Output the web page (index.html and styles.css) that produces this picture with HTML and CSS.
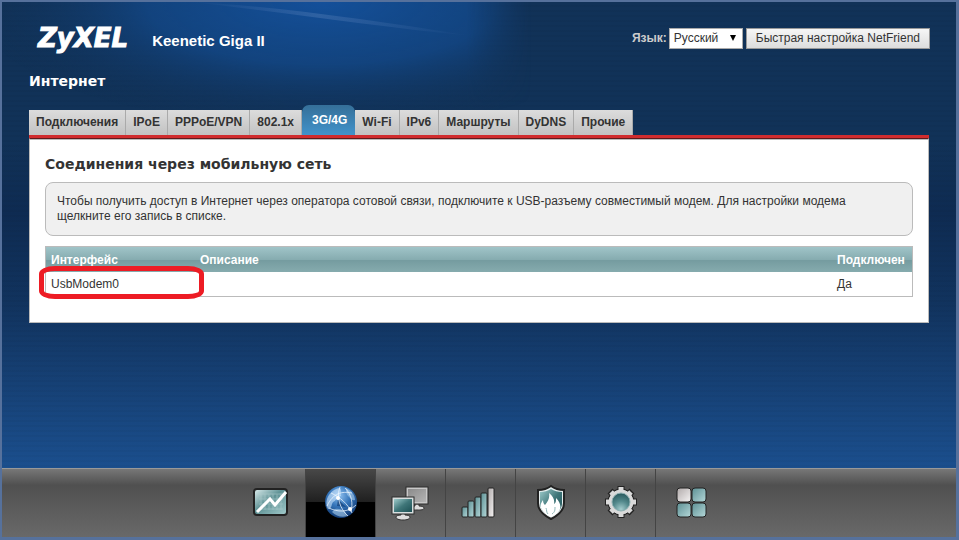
FILE: index.html
```html
<!DOCTYPE html>
<html lang="ru">
<head>
    <meta charset="UTF-8">
    <meta name="viewport" content="width=device-width, initial-scale=1.0">
    <title>Keenetic Giga II</title>
    <link rel="stylesheet" href="styles.css">
</head>
<body>
    <div class="page">
        <svg class="glow" width="540" height="130" viewBox="0 0 540 130" aria-hidden="true">
            <defs>
                <radialGradient id="light" gradientUnits="userSpaceOnUse" cx="0" cy="0" r="1" gradientTransform="translate(320 0) scale(350 125)"><stop offset="0" stop-color="#14509a"/><stop offset=".5" stop-color="#134888" stop-opacity=".8"/><stop offset="1" stop-color="#113258" stop-opacity="0"/></radialGradient>
                <linearGradient id="edge" x1="0" y1="0" x2="1" y2="0"><stop offset="0" stop-color="#fff"/><stop offset=".86" stop-color="#fff"/><stop offset=".98" stop-color="#000"/></linearGradient>
                <linearGradient id="ray" x1="0" y1="0" x2="1" y2="0"><stop offset="0" stop-color="#6d8fc4" stop-opacity="0"/><stop offset=".45" stop-color="#6d8fc4" stop-opacity=".3"/><stop offset="1" stop-color="#6d8fc4" stop-opacity="0"/></linearGradient>
                <mask id="fade"><rect width="540" height="130" fill="url(#edge)"/></mask>
            </defs>
            <rect width="540" height="130" fill="url(#light)" mask="url(#fade)"/>
            <path d="M190 0C270 4 370 18 470 34 370 24 280 10 190 0z" fill="url(#ray)"/>
        </svg>

        <header class="header">
            <div class="logo">ZyXEL</div>
            <div class="model">Keenetic Giga II</div>
            <div class="tools">
                <label for="lang">Язык:</label>
                <div class="select-wrap">
                    <select id="lang">
                        <option>Русский</option>
                        <option>English</option>
                    </select>
                    <svg class="arrow" width="6" height="6" viewBox="0 0 6 6" aria-hidden="true"><path d="M0 0h6L3 6z"/></svg>
                </div>
                <button type="button" class="wizard">Быстрая настройка NetFriend</button>
            </div>
        </header>

        <main class="content">
            <h1>Интернет</h1>
            <nav class="tabs">
                <a href="#connections">Подключения</a>
                <a href="#ipoe">IPoE</a>
                <a href="#pppoe">PPPoE/VPN</a>
                <a href="#8021x">802.1x</a>
                <a href="#modem" class="active">3G/4G</a>
                <a href="#wifi">Wi-Fi</a>
                <a href="#ipv6">IPv6</a>
                <a href="#routes">Маршруты</a>
                <a href="#dydns">DyDNS</a>
                <a href="#other">Прочие</a>
            </nav>
            <section class="panel">
                <h2>Соединения через мобильную сеть</h2>
                <p class="hint">Чтобы получить доступ в Интернет через оператора сотовой связи, подключите к USB-разъему совместимый модем. Для настройки модема щелкните его запись в списке.</p>
                <table class="list">
                    <thead>
                        <tr><th class="col-name">Интерфейс</th><th>Описание</th><th class="col-state">Подключен</th></tr>
                    </thead>
                    <tbody>
                        <tr><td class="marked">UsbModem0</td><td></td><td>Да</td></tr>
                    </tbody>
                </table>
            </section>
        </main>

        <nav class="dock">
            <a href="#monitor" aria-label="Монитор">
                <svg width="40" height="40" viewBox="0 0 40 40">
                    <defs>
                        <linearGradient id="teal" x1="0" y1="0" x2="1" y2="1"><stop offset="0" stop-color="#e0f0f0"/><stop offset=".45" stop-color="#5f9295"/><stop offset="1" stop-color="#a4cccd"/></linearGradient>
                        <linearGradient id="tile" x1="0" y1="0" x2="1" y2="1"><stop offset="0" stop-color="#5d9094"/><stop offset="1" stop-color="#b5d8d9"/></linearGradient>
                        <linearGradient id="screen" x1="0" y1="0" x2="1" y2="1"><stop offset="0" stop-color="#9ecbcb"/><stop offset=".5" stop-color="#3f7679"/><stop offset="1" stop-color="#1c5054"/></linearGradient>
                        <linearGradient id="gray" x1="0" y1="0" x2="1" y2="1"><stop offset="0" stop-color="#8b8b8b"/><stop offset="1" stop-color="#b4b4b4"/></linearGradient>
                        <linearGradient id="silver" x1="0" y1="0" x2="1" y2="1"><stop offset="0" stop-color="#b0aaaa"/><stop offset="1" stop-color="#f6f4f4"/></linearGradient>
                        <radialGradient id="globe" cx=".45" cy=".3" r=".75"><stop offset="0" stop-color="#8fc0ee"/><stop offset=".45" stop-color="#3575ba"/><stop offset="1" stop-color="#0d346d"/></radialGradient>
                        <radialGradient id="lens" cx=".5" cy=".9" r=".9"><stop offset="0" stop-color="#a4cccd"/><stop offset=".5" stop-color="#53898c"/><stop offset="1" stop-color="#28575b"/></radialGradient>
                    </defs>
                    <rect x="4" y="6" width="33" height="26" rx="3" fill="url(#teal)" stroke="#222" stroke-width="2"/>
                    <path d="M11 11v16M15 11v16M19 11v16M23 11v16M27 11v16M31 11v16M9 11h24M9 16h24M9 21h24M9 26h24" stroke="#b4d0d1" stroke-width="1" opacity=".5"/>
                    <path d="M7 29l13-13 5 6L36 9" fill="none" stroke="#fff" stroke-width="3"/>
                </svg>
            </a>
            <a href="#internet" class="active" aria-label="Интернет">
                <svg width="40" height="40" viewBox="0 0 40 40">
                    <circle cx="21" cy="19" r="16" fill="url(#globe)"/>
                    <path d="M7 16c2-6 8-11 13-11 2 3 0 5 1 8-4 0-5 5-8 6-2 3-1 7-5 7-2-3-2-7-1-10z" fill="#d2eaff" opacity=".6"/>
                    <path d="M26 5c5 2 9 7 9 12-4 1-4-2-7-4-2-2-2-5-2-8zM15 26c6-1 11 2 12 7-5 2-11 0-15-4z" fill="#b9dcf8" opacity=".55"/>
                    <path d="M18 16l8 8-9-1z" fill="#123e78" opacity=".7"/>
                    <path d="M7 23C13 10 22 8 32 10M11 10c9 4 17 11 21 20M20 4c-4 10 0 22 8 29M9 25c8 4 19 5 27-3M25 5c7 7 8 15 6 24" fill="none" stroke="#f0f8ff" stroke-width="1" opacity=".75"/>
                    <circle cx="18" cy="15" r="2" fill="#fff"/><circle cx="30" cy="26" r="2" fill="#fff"/>
                </svg>
            </a>
            <a href="#network" aria-label="Домашняя сеть">
                <svg width="40" height="40" viewBox="0 0 40 40">
                    <path d="M25 21h4v2c3 0 5 1 5 2 0 2-3 2-7 2s-7 0-7-2c0-1 2-2 5-2z" fill="#ddd" stroke="#333" stroke-width="1"/>
                    <rect x="16" y="4" width="22" height="17" fill="#c8c8c8" stroke="#2c2c2c" stroke-width="1"/>
                    <rect x="18" y="6" width="18" height="13" fill="url(#gray)"/>
                    <path d="M11 30h4v2c3 0 5 1 5 2 0 2-3 3-7 3s-7-1-7-3c0-1 2-2 5-2z" fill="#ddd" stroke="#333" stroke-width="1"/>
                    <rect x="2" y="14" width="22" height="17" fill="#d8dede" stroke="#2c2c2c" stroke-width="1"/>
                    <rect x="4" y="16" width="18" height="13" fill="url(#screen)"/>
                </svg>
            </a>
            <a href="#wifi-net" aria-label="Сеть Wi-Fi">
                <svg width="40" height="40" viewBox="0 0 40 40">
                    <g fill="url(#tile)" stroke="#222" stroke-width="1">
                        <rect x="2" y="24" width="6" height="10" rx="1"/>
                        <rect x="8" y="18" width="6" height="16" rx="1"/>
                        <rect x="15" y="14" width="6" height="20" rx="1"/>
                        <rect x="21" y="10" width="6" height="24" rx="1"/>
                        <rect x="28" y="5" width="6" height="29" rx="1" fill="url(#silver)"/>
                    </g>
                </svg>
            </a>
            <a href="#security" aria-label="Безопасность">
                <svg width="40" height="40" viewBox="0 0 40 40">
                    <path d="M21 3c4 3 8 4 13 4v13c0 7-5 12-13 16C13 32 8 27 8 20V7c5 0 9-1 13-4z" fill="#e6eeee" stroke="#222" stroke-width="2"/>
                    <path d="M21 6c3 2 7 3 11 3v11c0 6-4 10-11 13-7-3-11-7-11-13V9c4 0 8-1 11-3z" fill="url(#screen)"/>
                    <path d="M19 10c4 3 6 7 5 11 2-1 2-3 2-6 4 4 6 9 3 13-2 3-5 4-8 6-5-2-8-5-10-9-1-3 0-5 2-8 0 3 1 4 2 5 3-4 5-7 4-12z" fill="#fff"/>
                    <path d="M16 25c1 2 0 4 2 6M22 31c3-2 3-4 3-7" fill="none" stroke="#8fb7b8" stroke-width="1"/>
                </svg>
            </a>
            <a href="#system" aria-label="Система">
                <svg width="40" height="40" viewBox="0 0 40 40">
                    <g fill="none" stroke="#222">
                        <circle cx="21" cy="19" r="13" fill="#222"/>
                        <path d="M21 3v32M5 19h32M10 8l22 22M32 8L10 30" stroke-width="7"/>
                    </g>
                    <g fill="none" stroke="#dadada">
                        <circle cx="21" cy="19" r="12" fill="#dadada"/>
                        <path d="M21 4v30M6 19h30M11 9l20 20M31 9L11 29" stroke-width="5"/>
                    </g>
                    <circle cx="21" cy="19" r="9" fill="url(#lens)" stroke="#8fb0b2" stroke-width="1"/>
                </svg>
            </a>
            <a href="#apps" aria-label="Приложения">
                <svg width="40" height="40" viewBox="0 0 40 40">
                    <g fill="url(#tile)" stroke="#222" stroke-width="1">
                        <rect x="6" y="5" width="14" height="14" rx="3" fill="url(#silver)"/>
                        <rect x="21" y="5" width="14" height="14" rx="3"/>
                        <rect x="6" y="20" width="14" height="14" rx="3"/>
                        <rect x="21" y="20" width="14" height="14" rx="3"/>
                    </g>
                </svg>
            </a>
        </nav>
    </div>
</body>
</html>
```

FILE: styles.css
```css
* {
    box-sizing: border-box;
}

body {
    margin: 0;
    font-family: "Liberation Sans", Arial, sans-serif;
    font-size: 12px;
    color: #333;
}

.page {
    position: relative;
    display: flex;
    flex-direction: column;
    min-height: 100vh;
    border: solid #56719c;
    border-width: 2px 3px 3px 2px;
    background:
        repeating-linear-gradient(rgba(0, 0, 0, 0) 0, rgba(0, 0, 0, 0) 3px, rgba(0, 0, 0, 0.03) 3px, rgba(0, 0, 0, 0.03) 5px),
        linear-gradient(#113258 0, #113258 140px, #0e2b52 210px, #11335e 300px, #1b4f8e 468px);
}

.glow {
    position: absolute;
    top: 0;
    left: 0;
}

.header {
    position: relative;
    display: flex;
    align-items: center;
    padding: 16px 26px 0 36px;
    height: 56px;
    color: #fff;
}

.logo {
    font-family: "DejaVu Sans", Verdana, sans-serif;
    font-size: 26px;
    font-weight: bold;
    font-style: italic;
    -webkit-text-stroke: 1px #fff;
}

.model {
    margin-left: 24px;
    padding-top: 4px;
    font-size: 15px;
    font-weight: bold;
}

.tools {
    display: flex;
    align-items: center;
    margin-left: auto;
}

.tools label {
    margin-right: 2px;
    font-weight: bold;
    color: #ccc;
}

.select-wrap {
    position: relative;
}

select {
    appearance: none;
    width: 74px;
    height: 21px;
    padding: 0 4px;
    border: 1px solid #aaa;
    border-radius: 0;
    background: #fff;
    font: inherit;
    color: #333;
}

.arrow {
    position: absolute;
    top: 7px;
    right: 7px;
}

.wizard {
    height: 21px;
    margin-left: 3px;
    padding: 0 9px;
    border: 1px solid #999;
    background: linear-gradient(#f6f6f6, #ddd);
    font: inherit;
    color: #333;
}

.content {
    position: relative;
    flex: 1;
    padding: 0 27px;
}

h1, h2 {
    font-family: "DejaVu Sans", Verdana, sans-serif;
    font-size: 14px;
    line-height: 18px;
}

h1 {
    margin: 14px 0 15px;
    color: #fff;
}

.tabs {
    display: flex;
    align-items: flex-end;
    border-bottom: 3px solid #d12c2e;
}

.tabs a {
    height: 25px;
    padding: 0 7px;
    border-right: 1px solid #aaa;
    background: linear-gradient(#dcdcdc, #c2c2c2);
    line-height: 24px;
    font-weight: bold;
    color: #333;
    text-decoration: none;
}

.tabs .active {
    height: 30px;
    padding: 0 8px 0 10px;
    border-right: none;
    border-radius: 7px 7px 0 0;
    background: linear-gradient(#356f98, #4293cb);
    line-height: 30px;
    color: #fff;
}

.panel {
    padding: 16px 15px 25px;
    border: 1px solid #bbb;
    border-top-color: #5f1a1c;
    background: #fff;
    box-shadow: inset 0 1px #bbb;
}

h2 {
    margin: 0 0 9px;
    color: #333;
}

.hint {
    margin: 0 0 10px;
    padding: 11px;
    border: 1px solid #bbb;
    border-radius: 8px;
    background: #f0f0f0;
    line-height: 15px;
}

.list {
    width: 100%;
    border: 1px solid #bbb;
    border-collapse: separate;
    border-spacing: 0;
}

.list thead {
    background: linear-gradient(#a0c4c8 0, #86acb0 50%, #749b9f 51%, #86abae 100%);
}

.list th,
.list td {
    padding: 0 5px;
    text-align: left;
}

.list th {
    height: 25px;
    color: #fff;
}

.list td {
    height: 24px;
}

.col-name {
    width: 149px;
}

.col-state {
    width: 80px;
}

.marked {
    position: relative;
}

/* red outline around the modem entry */
.marked::after {
    content: "";
    position: absolute;
    top: -6px;
    right: -9px;
    bottom: -3px;
    left: -7px;
    border: 5px solid #ed1c24;
    border-radius: 16px / 8px;
}

.dock {
    display: flex;
    justify-content: center;
    height: 69px;
    padding-left: 3px;
    border-top: 1px solid #999;
    background: linear-gradient(#777 0, #505050 16px, #696969 100%);
}

.dock a {
    display: flex;
    align-items: center;
    justify-content: center;
    width: 70px;
    border-right: 1px solid #444;
}

.dock a:last-child {
    border-right: none;
}

.dock .active {
    background: linear-gradient(#484848 0, #202020 48%, #000 49%);
}
```
